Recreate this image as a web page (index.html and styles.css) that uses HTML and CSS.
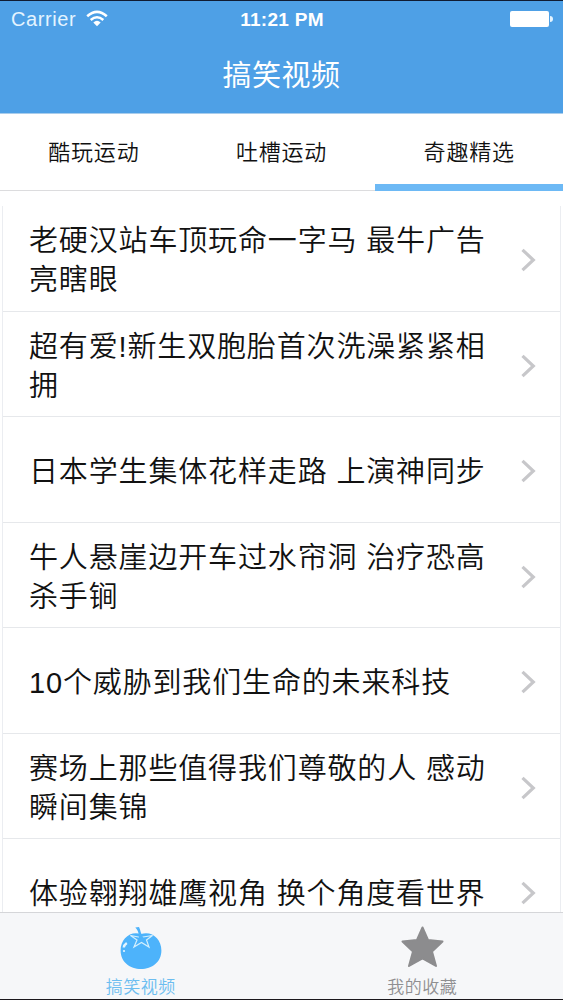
FILE: index.html
```html
<!DOCTYPE html>
<html lang="zh-CN">
<head>
    <meta charset="UTF-8">
    <meta name="viewport" content="width=device-width, initial-scale=1.0">
    <title>搞笑视频</title>
    <link rel="stylesheet" href="styles.css">
</head>
<body>
    <div class="phone">
        <!-- 顶部导航 -->
        <header class="header">
            <div class="status-bar">
                <div class="status-left">
                    <span class="carrier">Carrier</span>
                    <svg class="wifi" width="22" height="17" viewBox="0 0 22 17">
                        <path d="M1.2 6.2Q11 -2.4 20.8 6.2" fill="none" stroke="#fff" stroke-width="2.6"/>
                        <path d="M4.7 10Q11 4.5 17.3 10" fill="none" stroke="#fff" stroke-width="2.5"/>
                        <path d="M7.3 12.4Q11 9.2 14.7 12.4L11 16.2Z" fill="#fff"/>
                    </svg>
                </div>
                <span class="time">11:21 PM</span>
                <div class="battery"></div>
            </div>
            <h1 class="title">搞笑视频</h1>
        </header>

        <!-- 分类 -->
        <nav class="tabs">
            <a class="tab">酷玩运动</a>
            <a class="tab">吐槽运动</a>
            <a class="tab active">奇趣精选</a>
        </nav>

        <!-- 视频列表 -->
        <main class="list-wrap">
            <ul class="list">
                <li class="item">
                    <span class="item-text">老硬汉站车顶玩命一字马 最牛广告<br>亮瞎眼</span>
                    <svg class="arrow" width="15" height="24" viewBox="0 0 15 24"><path d="M1.5 1.8L12.3 12L1.5 22.2"/></svg>
                </li>
                <li class="item">
                    <span class="item-text">超有爱!新生双胞胎首次洗澡紧紧相<br>拥</span>
                    <svg class="arrow" width="15" height="24" viewBox="0 0 15 24"><path d="M1.5 1.8L12.3 12L1.5 22.2"/></svg>
                </li>
                <li class="item">
                    <span class="item-text">日本学生集体花样走路 上演神同步</span>
                    <svg class="arrow" width="15" height="24" viewBox="0 0 15 24"><path d="M1.5 1.8L12.3 12L1.5 22.2"/></svg>
                </li>
                <li class="item">
                    <span class="item-text">牛人悬崖边开车过水帘洞 治疗恐高<br>杀手锏</span>
                    <svg class="arrow" width="15" height="24" viewBox="0 0 15 24"><path d="M1.5 1.8L12.3 12L1.5 22.2"/></svg>
                </li>
                <li class="item">
                    <span class="item-text">10个威胁到我们生命的未来科技</span>
                    <svg class="arrow" width="15" height="24" viewBox="0 0 15 24"><path d="M1.5 1.8L12.3 12L1.5 22.2"/></svg>
                </li>
                <li class="item">
                    <span class="item-text">赛场上那些值得我们尊敬的人 感动<br>瞬间集锦</span>
                    <svg class="arrow" width="15" height="24" viewBox="0 0 15 24"><path d="M1.5 1.8L12.3 12L1.5 22.2"/></svg>
                </li>
                <li class="item">
                    <span class="item-text">体验翱翔雄鹰视角 换个角度看世界</span>
                    <svg class="arrow" width="15" height="24" viewBox="0 0 15 24"><path d="M1.5 1.8L12.3 12L1.5 22.2"/></svg>
                </li>
            </ul>
        </main>

        <!-- 底部标签栏 -->
        <footer class="tab-bar">
            <a class="bar-item current">
                <svg class="bar-icon" width="44" height="46" viewBox="0 0 44 46">
                    <path d="M22 9C33 5.500 42.400 14 42.400 25.500C42.400 37 33 44 22 44C11 44 1.600 37 1.600 25.500C1.600 14 11 5.500 22 9Z" fill="#4db3fb"/>
                    <path d="M19.500 12L11.500 10.500L18 15L15 22L22.500 17.500L30 22L27.500 15L33.500 10.500L24 12Z" fill="#4db3fb" stroke="#d3effd" stroke-width="1.200"/>
                    <path d="M16.300 2.500L20 2C21.500 5 21.500 8.500 24.500 13L20 13.500C20 9 19.500 6 16.300 2.500Z" fill="#4db3fb"/>
                    <path d="M7.800 18Q5 20 4.800 22.500" fill="none" stroke="#e3f5ff" stroke-width="2.400"/>
                    <circle cx="5" cy="26" r="1.100" fill="#e3f5ff"/>
                </svg>
                <span>搞笑视频</span>
            </a>
            <a class="bar-item">
                <svg class="bar-icon" width="44" height="46" viewBox="0 0 44 46">
                    <path d="M22.500 2.500L28 15L42.500 16.500L32 26.500L36 41L22.500 33.500L9 41L13 26.500L2.500 16.500L17 15Z" fill="#8c8c8e" stroke="#8c8c8e" stroke-width="2" stroke-linejoin="round"/>
                </svg>
                <span>我的收藏</span>
            </a>
        </footer>
    </div>
</body>
</html>
```

FILE: styles.css
```css
/* 基础样式 */
* {
    box-sizing: border-box;
}

body {
    margin: 0;
    background: #fff;
    font-family: "Liberation Sans", "Noto Sans CJK SC", sans-serif;
    color: #111;
    overflow: hidden;
}

.phone {
    display: flex;
    flex-direction: column;
    width: 563px;
    height: 1000px;
    border-top: 1px solid #101c33;
    border-bottom: 1px solid #1b181d;
}

/* 顶部导航 */
.header {
    flex: none;
    height: 113px;
    background: #4ea0e6;
    border-bottom: 1px solid #a9cdec;
    color: #fff;
}

.status-bar {
    display: grid;
    grid-template-columns: 1fr auto 1fr;
    align-items: center;
    height: 37px;
    padding: 0 10px 0 11px;
}

.status-left {
    display: flex;
    align-items: center;
    gap: 10px;
}

.carrier {
    font-size: 20px;
    letter-spacing: 0.6px;
    color: #e4f4ff;
}

.wifi {
    margin-top: -3px;
}

.time {
    font-size: 19px;
    font-weight: bold;
    letter-spacing: 0.3px;
}

/* 电池 */
.battery {
    position: relative;
    justify-self: end;
    width: 39px;
    height: 16px;
    margin: -1px 4px 0 0;
    background: #fff;
    border-radius: 2px;
}

.battery:after {
    content: '';
    position: absolute;
    right: -4px;
    top: 5px;
    width: 3px;
    height: 6px;
    background: #e4f4ff;
    border-radius: 0 3px 3px 0;
}

.title {
    margin: 0;
    font-size: 29px;
    font-weight: 400;
    line-height: 77px;
    letter-spacing: 0.5px;
    text-align: center;
}

/* 分类 */
.tabs {
    flex: none;
    display: flex;
    height: 77px;
    border-bottom: 1px solid #dcdcde;
}

.tab {
    flex: 1;
    height: 77px;
    font-size: 22px;
    font-weight: 350;
    line-height: 77px;
    letter-spacing: 0.8px;
    text-align: center;
}

.tab.active {
    border-bottom: 7px solid #6db9f5;
}

/* 视频列表 */
.list-wrap {
    flex: 1;
    min-height: 0;
    overflow: hidden;
    padding: 15px 2px 0;
}

.list {
    margin: 0;
    padding: 0;
    list-style: none;
    border-left: 1px solid #ebedf1;
    border-right: 1px solid #ebedf1;
}

.item {
    display: flex;
    align-items: center;
    justify-content: space-between;
    height: 105.5px;
    padding: 4px 24px 0 26px;
    border-bottom: 1px solid #e6e8eb;
}

.item-text {
    padding-top: 2px;
    font-size: 29px;
    font-weight: 350;
    line-height: 39px;
    letter-spacing: 0.85px;
    white-space: nowrap;
}

.arrow {
    flex: none;
    fill: none;
    stroke: #c7c7ca;
    stroke-width: 3.2;
}

/* 底部标签栏 */
.tab-bar {
    flex: none;
    display: flex;
    height: 87px;
    background: #f6f7f9;
    border-top: 1px solid #d5d6d9;
}

.bar-item {
    flex: 1;
    display: flex;
    flex-direction: column;
    align-items: center;
    gap: 1px;
    padding-top: 12px;
    color: #8f8f91;
    font-size: 17px;
    font-weight: 350;
    line-height: 32px;
    letter-spacing: 0.5px;
}

.bar-icon {
    flex: none;
}

.bar-item.current {
    color: #6cbdf0;
}
```
